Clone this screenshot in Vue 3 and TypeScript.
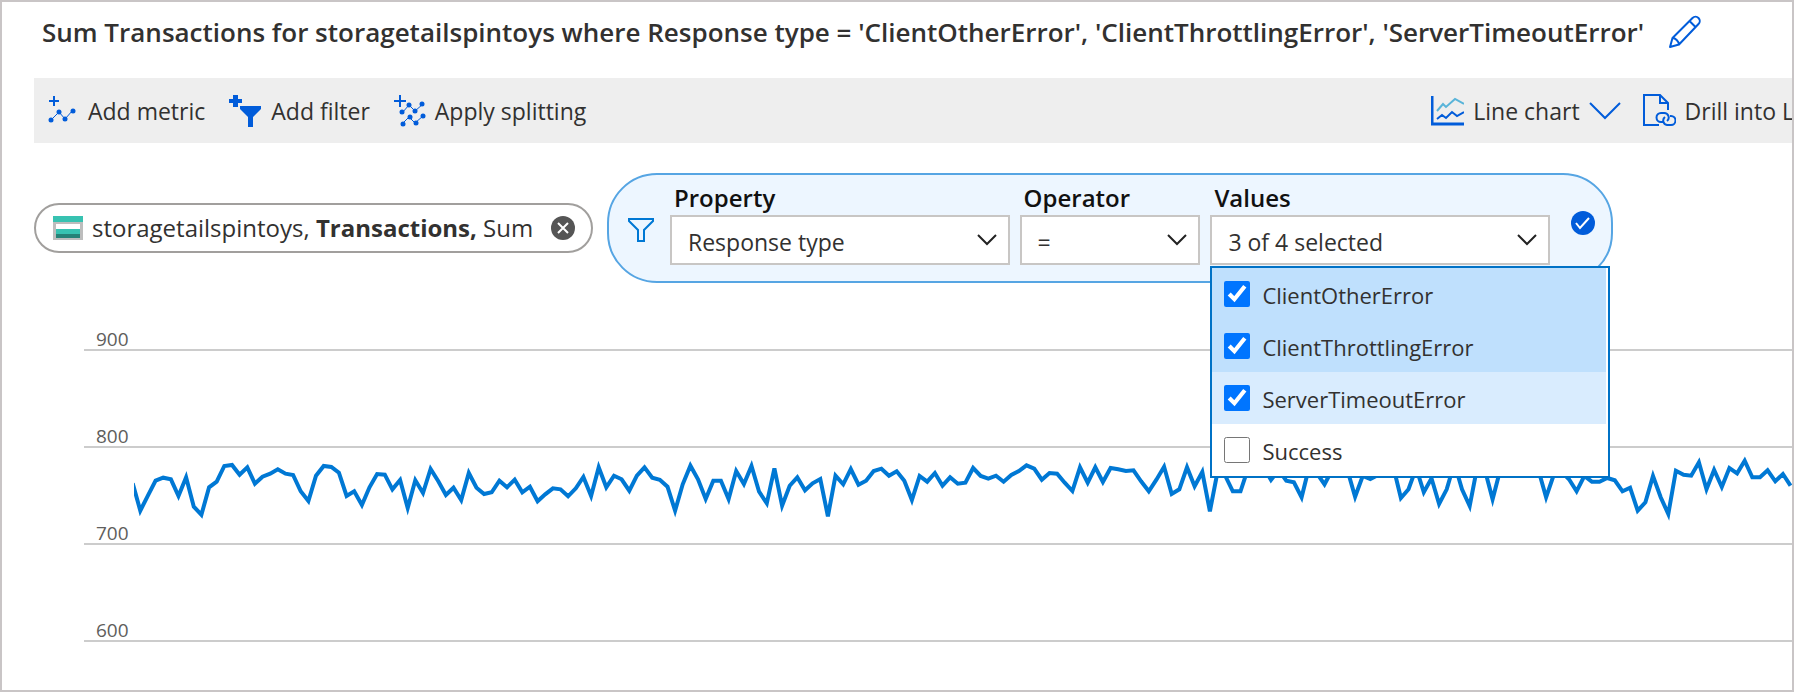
<script setup lang="ts">
import { ref } from 'vue'

interface Choice {
  name: string
  checked: boolean
  tone: string
}

const choices = ref<Choice[]>([
  { name: 'ClientOtherError', checked: true, tone: 'strong' },
  { name: 'ClientThrottlingError', checked: true, tone: 'strong' },
  { name: 'ServerTimeoutError', checked: true, tone: 'light' },
  { name: 'Success', checked: false, tone: 'plain' },
])

const ticks = [900, 800, 700, 600]

// One sample per interval, measured downwards from just above the 800 line, three units to a pixel.
const samples = [
  212, 167, 122, 113, 118, 168, 112, 200, 224, 142, 125, 78, 75, 104, 82, 131, 110, 101, 88, 101,
  105, 154, 183, 107, 78, 81, 98, 168, 154, 195, 142, 102, 104, 148, 120, 204, 121, 159, 87, 124,
  165, 143, 180, 99, 143, 162, 157, 122, 142, 119, 157, 140, 184, 163, 145, 148, 169, 145, 111, 168,
  82, 142, 107, 118, 152, 107, 82, 113, 119, 140, 212, 133, 77, 118, 177, 122, 122, 177, 93, 132,
  78, 155, 190, 85, 197, 137, 112, 151, 130, 117, 229, 107, 133, 87, 134, 122, 93, 86, 107, 94,
  122, 180, 108, 125, 99, 137, 112, 131, 128, 84, 108, 116, 107, 125, 105, 93, 76, 86, 119, 99,
  101, 128, 153, 82, 128, 82, 126, 84, 88, 93, 91, 124, 154, 119, 80, 162, 148, 82, 139, 96,
  214, 96, 107, 154, 154, 85, 100, 80, 120, 90, 122, 127, 172, 80, 100, 133, 90, 80, 90, 170,
  108, 117, 105, 90, 80, 174, 148, 84, 157, 115, 192, 148, 70, 148, 198, 80, 90, 178, 90, 80,
  90, 80, 90, 90, 172, 105, 95, 118, 154, 108, 125, 125, 114, 121, 154, 143, 212, 187, 108,
  172, 222, 92, 104, 107, 67, 148, 90, 141, 84, 100, 62, 112, 112, 91, 124, 102, 137,
]

const plotWidth = 1658
const step = 7.64
const points = [130, ...samples]
  .map((s, i) => `${(6.3 + (i - 1) * step).toFixed(1)},${(s / 3).toFixed(1)}`)
  .join(' ')
</script>

<template>
  <main class="page">
    <header class="heading">
      <h1>Sum Transactions for storagetailspintoys where Response type = 'ClientOtherError', 'ClientThrottlingError', 'ServerTimeoutError'</h1>
      <button class="bare" type="button" aria-label="Edit title">
        <svg width="34" height="34" viewBox="0 0 34 34" fill="none" stroke="#015cda" stroke-width="2" stroke-linejoin="round">
          <path d="M2 32l2.500-9L24.500 3a4 4 0 0 1 6 6L11 29.500zM21.500 6l6 6M4.500 23c3 0 6 3 6.500 6.500" />
        </svg>
      </button>
    </header>

    <nav class="toolbar">
      <button class="tool" type="button">
        <svg width="31" height="30" viewBox="0 0 31 30" fill="#015cda">
          <path d="M5 0h2v4h4v2H7v4H5V6H1V4h4z" />
          <path d="M3 24l8-8 6 7 8-9" fill="none" stroke="#015cda" />
          <circle cx="3" cy="24" r="2.500" /><circle cx="11" cy="16" r="2.500" /><circle cx="17" cy="23" r="2.500" /><circle cx="25" cy="15" r="2.500" />
        </svg>
        Add metric
      </button>
      <button class="tool" type="button">
        <svg width="33" height="32" viewBox="0 0 33 32" fill="#015cda">
          <path d="M4 0h5v4h4v4H9v4H4V8H0V4h4zM11 11h21v3l-8 8v10h-5V22l-8-8z" />
        </svg>
        Add filter
      </button>
      <button class="tool" type="button">
        <svg width="32" height="32" viewBox="0 0 32 32" fill="#015cda">
          <path d="M5 0h2v5h5v2H7v5H5V7H0V5h5z" />
          <path d="M8 18l7-8 6 6 8-7M8 29l7-7 6 6 8-7" fill="none" stroke="#015cda" />
          <circle cx="8" cy="17" r="2.500" /><circle cx="15" cy="10" r="2.500" /><circle cx="21" cy="16" r="2.500" /><circle cx="28" cy="9" r="2.500" />
          <circle cx="9" cy="29" r="2.500" /><circle cx="16" cy="22" r="2.500" /><circle cx="22" cy="28" r="2.500" /><circle cx="29" cy="21" r="2.500" />
        </svg>
        Apply splitting
      </button>
      <div class="tools-end">
        <button class="tool" type="button">
          <svg width="33" height="30" viewBox="0 0 33 30" fill="none" stroke="#015cda" stroke-width="2">
            <path d="M1 0v28h32" stroke-width="3" />
            <path d="M6 15l6-7 3 3 9-8 9 5" stroke="#59b4d9" />
            <path d="M6 23l5-4 4 3 6-6 5 4 7-4" />
          </svg>
          Line chart
          <svg width="32" height="20" viewBox="0 0 32 20" fill="none" stroke="#015cda" stroke-width="2"><path d="M1 2l15 15L31 2" /></svg>
        </button>
        <button class="tool" type="button">
          <svg width="33" height="33" viewBox="0 0 33 33" fill="none" stroke="#015cda" stroke-width="2">
            <path d="M16 31H1V1h16l8 8v7M17 1v8h8" />
            <path d="M20 28h-2a4.500 4.500 0 0 1 0-9h3a4.500 4.500 0 0 1 3 8M27 22h1a4.500 4.500 0 0 1 0 9h-4a4.500 4.500 0 0 1-2-8" />
          </svg>
          Drill into L
        </button>
      </div>
    </nav>

    <section class="pills">
      <div class="metric">
        <svg width="30" height="24" viewBox="0 0 30 24">
          <path d="M0 0h30v24H0z" fill="#bdbdbd" /><path d="M0 0h30v6H0z" fill="#37c2b1" />
          <path d="M3 8h24v5H3z" fill="#fff" /><path d="M3 13h24v5H3z" fill="#37c2b1" /><path d="M3 18h24v4H3z" fill="#258277" />
        </svg>
        <span class="metric-name">storagetailspintoys, <b>Transactions,</b> Sum</span>
        <button class="bare" type="button" aria-label="Remove metric">
          <svg width="24" height="24" viewBox="0 0 24 24"><circle cx="12" cy="12" r="12" fill="#555" /><path d="M7 7l10 10M17 7L7 17" stroke="#fff" stroke-width="2" /></svg>
        </button>
      </div>

      <form class="filter" @submit.prevent>
        <svg class="funnel" width="26" height="24" viewBox="0 0 26 24" fill="none" stroke="#0078d4" stroke-width="2">
          <path d="M1 1h24v2l-9 9v11h-6V12L1 3z" />
        </svg>
        <div class="field wide">
          <label for="property">Property</label>
          <div class="box">
            <select id="property"><option>Response type</option></select>
            <svg class="caret" width="20" height="12" viewBox="0 0 20 12"><path d="M1 1l9 9 9-9" /></svg>
          </div>
        </div>
        <div class="field narrow">
          <label for="operator">Operator</label>
          <div class="box">
            <select id="operator"><option>=</option></select>
            <svg class="caret" width="20" height="12" viewBox="0 0 20 12"><path d="M1 1l9 9 9-9" /></svg>
          </div>
        </div>
        <div class="field wide">
          <label for="values">Values</label>
          <div class="box">
            <button id="values" class="opener" type="button" aria-haspopup="true" aria-expanded="true">3 of 4 selected</button>
            <svg class="caret" width="20" height="12" viewBox="0 0 20 12"><path d="M1 1l9 9 9-9" /></svg>
          </div>
          <div class="menu">
            <label v-for="c in choices" :key="c.name" class="choice" :class="c.tone">
              <input v-model="c.checked" type="checkbox">
              <span>{{ c.name }}</span>
            </label>
          </div>
        </div>
        <button class="bare apply" type="submit" aria-label="Apply filter">
          <svg width="24" height="24" viewBox="0 0 24 24"><circle cx="12" cy="12" r="12" fill="#015cda" /><path d="M5 12l4 5 9-10" fill="none" stroke="#fff" stroke-width="2" /></svg>
        </button>
      </form>
    </section>

    <section class="chart">
      <div v-for="t in ticks" :key="t" class="tick">{{ t }}</div>
      <svg class="plot" :viewBox="`0 0 ${plotWidth} 90`" preserveAspectRatio="none">
        <polyline :points="points" fill="none" stroke="#0078d4" stroke-width="4" vector-effect="non-scaling-stroke" />
      </svg>
    </section>
  </main>
</template>

<style>
body {
  margin: 0;
}
</style>

<style scoped>
* {
  box-sizing: border-box;
}
.page {
  min-height: 100vh;
  padding-left: 32px;
  border: 2px solid #c9c5c6;
  background: #fff;
  color: #323130;
  font: 23px/32px "Open Sans", "Noto Sans", sans-serif;
  overflow: hidden;
}
button,
select {
  font: inherit;
  color: inherit;
  margin: 0;
  border: 0;
  background: none;
}
svg {
  flex: none;
  display: block;
}
.bare {
  padding: 0;
  flex: none;
}
.heading {
  display: flex;
  align-items: center;
  gap: 24px;
  height: 60px;
  padding-left: 8px;
}
h1 {
  margin: 0;
  font-size: 26px;
  font-weight: 600;
  white-space: nowrap;
}
.toolbar {
  display: flex;
  align-items: center;
  gap: 24px;
  margin-top: 16px;
  height: 65px;
  padding-left: 14px;
  background: #eee;
}
.tool {
  display: flex;
  align-items: center;
  gap: 9px;
  padding: 0;
  white-space: nowrap;
}
.tools-end {
  display: flex;
  gap: 22px;
  margin-left: auto;
  margin-right: -2px;
}
.pills {
  display: flex;
  align-items: center;
  gap: 14px;
  margin-top: 30px;
}
.metric {
  display: flex;
  align-items: center;
  height: 50px;
  width: 559px;
  padding: 0 16px 0 17px;
  border: 2px solid #a19f9d;
  border-radius: 25px;
}
.metric-name {
  margin-left: 9px;
  margin-right: auto;
  font-size: 24px;
  white-space: nowrap;
}
.filter {
  display: flex;
  align-items: flex-start;
  gap: 10px;
  height: 110px;
  width: 1006px;
  padding: 8px 16px 0 19px;
  border: 2px solid #56a5e3;
  border-radius: 50px;
  background: #edf6ff;
}
.funnel {
  margin-top: 35px;
  margin-right: 6px;
}
.field {
  position: relative;
}
.field > label {
  display: block;
  padding: 0 0 2px 4px;
  font-size: 24px;
  line-height: 30px;
  font-weight: 600;
  color: #111;
}
.wide {
  width: 340px;
}
.narrow {
  width: 181px;
}
.box {
  display: grid;
  align-items: center;
  height: 50px;
  border: 2px solid #c8c6c4;
  background: #fff;
}
.box > * {
  grid-area: 1 / 1;
}
.box select,
.opener {
  appearance: none;
  height: 46px;
  padding: 4px 16px 0;
  text-align: left;
}
.caret {
  justify-self: end;
  margin-right: 11px;
  fill: none;
  stroke: #222;
  stroke-width: 2;
  pointer-events: none;
}
.apply {
  margin: 28px 0 0 11px;
}
.menu {
  position: absolute;
  z-index: 2;
  top: 83px;
  left: 0;
  width: 400px;
  padding-right: 2px;
  border: 2px solid #0072c6;
  background: #fff;
}
.choice {
  display: flex;
  align-items: center;
  gap: 12px;
  height: 52px;
  padding-left: 12px;
  font-size: 22px;
}
.choice span {
  padding-top: 2px;
}
.choice input {
  width: 26px;
  height: 26px;
  margin: 0;
}
.strong {
  background: #bfe0fd;
}
.light {
  background: #d9ecfe;
}
.chart {
  position: relative;
  margin: 40px 0 0 50px;
}
.tick {
  display: flex;
  align-items: flex-end;
  height: 97px;
  padding-left: 12px;
  border-bottom: 2px solid #ccc;
  font-size: 19px;
  line-height: 20px;
  color: #605e5c;
}
.tick:first-child {
  height: 28px;
}
.plot {
  position: absolute;
  top: 117px;
  left: 50px;
  width: calc(100% - 50px);
  height: 90px;
}
</style>
